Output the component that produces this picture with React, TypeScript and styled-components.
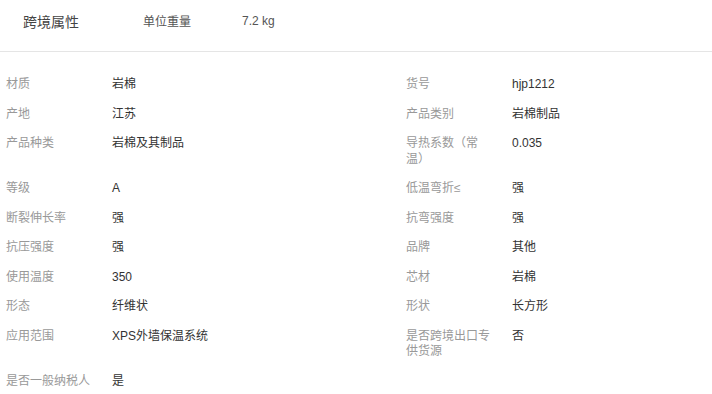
import React from "react";
import styled, { createGlobalStyle } from "styled-components";

const GlobalStyle = createGlobalStyle`
  body {
    margin: 0;
    background: #fff;
    font-family: "Liberation Sans", "Noto Sans CJK SC", sans-serif;
  }
`;

const Root = styled.div`
  width: 712px;
`;

const Header = styled.div`
  display: flex;
  align-items: center;
  height: 52px;
  box-sizing: border-box;
  padding: 0 0 10px 23px;
  border-bottom: 1px solid #e5e5e5;
`;

const Title = styled.div`
  width: 120px;
  font-size: 14px;
  color: #444;
`;

const HeaderLabel = styled.div`
  width: 99px;
  font-size: 12px;
  color: #555;
`;

const HeaderValue = styled.div`
  font-size: 12px;
  color: #555;
`;

const Grid = styled.div`
  display: grid;
  grid-template-columns: 400px 1fr;
  padding: 18px 0 0 6px;
`;

const Item = styled.div`
  display: flex;
  align-items: flex-start;
  padding: 7px 0 7px;
  font-size: 12px;
  line-height: 15.5px;
`;

const Label = styled.div`
  width: 90px;
  margin-right: 16px;
  color: #999;
  flex-shrink: 0;
`;

const Value = styled.div`
  color: #333;
`;

const attrs: [string, string][] = [
  ["材质", "岩棉"],
  ["货号", "hjp1212"],
  ["产地", "江苏"],
  ["产品类别", "岩棉制品"],
  ["产品种类", "岩棉及其制品"],
  ["导热系数（常温）", "0.035"],
  ["等级", "A"],
  ["低温弯折≤", "强"],
  ["断裂伸长率", "强"],
  ["抗弯强度", "强"],
  ["抗压强度", "强"],
  ["品牌", "其他"],
  ["使用温度", "350"],
  ["芯材", "岩棉"],
  ["形态", "纤维状"],
  ["形状", "长方形"],
  ["应用范围", "XPS外墙保温系统"],
  ["是否跨境出口专供货源", "否"],
  ["是否一般纳税人", "是"],
];

export default function App() {
  return (
    <Root>
      <GlobalStyle />
      <Header>
        <Title>跨境属性</Title>
        <HeaderLabel>单位重量</HeaderLabel>
        <HeaderValue>7.2 kg</HeaderValue>
      </Header>
      <Grid>
        {attrs.map(([k, v]) => (
          <Item key={k}>
            <Label>{k}</Label>
            <Value>{v}</Value>
          </Item>
        ))}
      </Grid>
    </Root>
  );
}
